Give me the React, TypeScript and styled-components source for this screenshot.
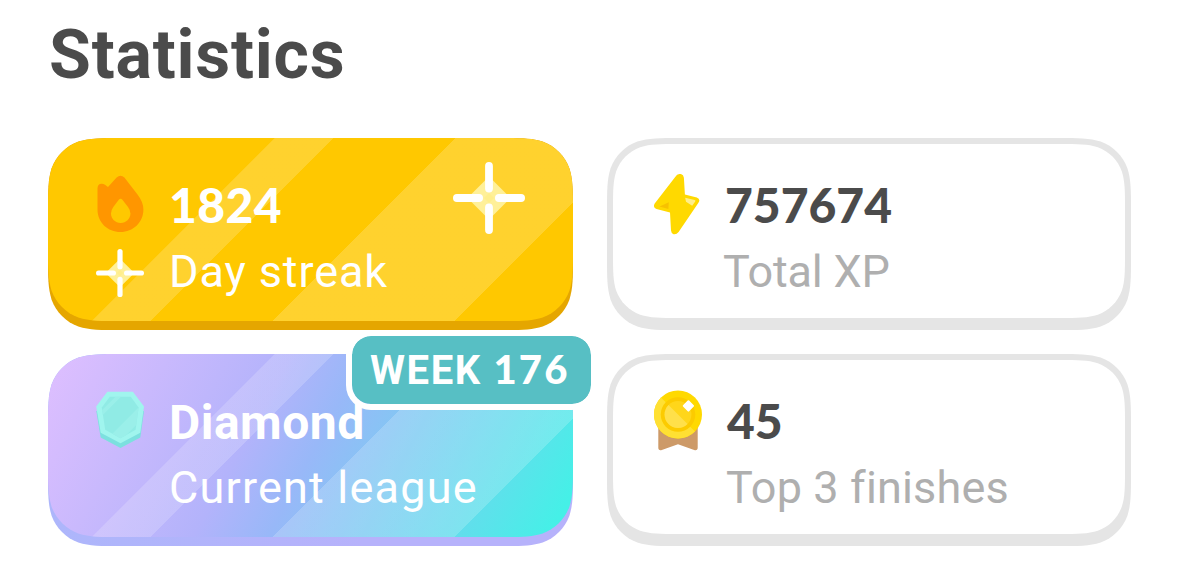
import React from 'react';
import styled, { createGlobalStyle } from 'styled-components';

// continuous ("squircle") corner, radius r, on a w x h box
const squircle = (w: number, h: number, r: number) => {
  const a = 1.52866 * r;
  const b = 1.08849 * r;
  const c = 0.86841 * r;
  const d = 0.63149 * r;
  const e = 0.07491 * r;
  const f = 0.37282 * r;
  const g = 0.16906 * r;
  return [
    `M${a} 0 L${w - a} 0`,
    `C${w - b} 0 ${w - c} 0 ${w - d} ${e}`,
    `C${w - f} ${g} ${w - g} ${f} ${w - e} ${d}`,
    `C${w} ${c} ${w} ${b} ${w} ${a}`,
    `L${w} ${h - a}`,
    `C${w} ${h - b} ${w} ${h - c} ${w - e} ${h - d}`,
    `C${w - g} ${h - f} ${w - f} ${h - g} ${w - d} ${h - e}`,
    `C${w - c} ${h} ${w - b} ${h} ${w - a} ${h}`,
    `L${a} ${h}`,
    `C${b} ${h} ${c} ${h} ${d} ${h - e}`,
    `C${f} ${h - g} ${g} ${h - f} ${e} ${h - d}`,
    `C0 ${h - c} 0 ${h - b} 0 ${h - a}`,
    `L0 ${a}`,
    `C0 ${b} 0 ${c} ${e} ${d}`,
    `C${g} ${f} ${f} ${g} ${d} ${e}`,
    `C${c} 0 ${b} 0 ${a} 0 Z`,
  ].join(' ');
};

const GlobalStyle = createGlobalStyle`
  * {
    box-sizing: border-box;
  }

  body {
    margin: 0;
    background: #fff;
    font-family: Roboto, "Liberation Sans", sans-serif;
    overflow: hidden;
  }
`

const Page = styled.main`
  height: 579px;
  padding: 15px 48px 0;
`

const Title = styled.h1`
  margin: 0 0 43px;
  padding-left: 1px;
  height: 80px;
  font-size: 68px;
  line-height: 80px;
  font-weight: 700;
  letter-spacing: 0.8px;
  color: #4b4b4b;
`

const Grid = styled.section`
  display: grid;
  grid-template-columns: 525px 524px;
  grid-auto-rows: 192px;
  gap: 24px 34px;
`

const Cell = styled.div`
  position: relative;
`

const Base = styled.div<{ $w: number; $fill: string; $outlined?: boolean }>`
  width: ${p => p.$w}px;
  height: 192px;
  padding: ${p => (p.$outlined ? '6px 6px 12px' : '0 0 9px')};
  background: ${p => p.$fill};
  clip-path: path('${p => squircle(p.$w, 192, 48)}');
`

const stripes = `linear-gradient(
  135deg,
  transparent 160px,
  rgba(255, 255, 255, 0.18) 160.7px,
  rgba(255, 255, 255, 0.18) 201.5px,
  transparent 202.2px,
  transparent 287.8px,
  rgba(255, 255, 255, 0.18) 288.5px,
  rgba(255, 255, 255, 0.18) 416.5px,
  transparent 417.2px
)`

const ShinyFace = styled.div<{ $fill: string }>`
  display: flex;
  height: 183px;
  padding: 36px 0 0 48px;
  background: ${stripes}, ${p => p.$fill};
  clip-path: path('${squircle(525, 183, 48)}');
`

const PlainFace = styled.div`
  display: flex;
  height: 174px;
  padding: 30px 0 0 41px;
  background: #fff;
  clip-path: path('${squircle(512, 174, 43)}');
`

const Icons = styled.div`
  flex: none;
  width: 48px;
  margin-right: 23px;
  display: flex;
  flex-direction: column;
  gap: 15px;

  svg {
    display: block;
  }
`

const Texts = styled.div`
  white-space: nowrap;
`

const Value = styled.div<{ $color: string; $spacing: number; $indent?: number }>`
  height: 66px;
  padding-left: ${p => p.$indent || 0}px;
  font-size: 48px;
  line-height: 66px;
  font-weight: 700;
  letter-spacing: ${p => p.$spacing}px;
  color: ${p => p.$color};
`

const Digits = styled(Value)`
  font-family: Lato, Roboto, sans-serif;
  font-weight: 900;
  line-height: 62px;
`

const Label = styled.div<{ $color: string; $spacing: number; $indent?: number }>`
  margin-left: ${p => p.$indent || 0}px;
  font-size: 45px;
  line-height: 64px;
  letter-spacing: ${p => p.$spacing}px;
  color: ${p => p.$color};
`

const CornerSparkle = styled.div`
  position: absolute;
  top: 24px;
  right: 48px;
  line-height: 0;
`

const Badge = styled.div`
  position: absolute;
  top: -24px;
  left: 298px;
  width: 251px;
  height: 80px;
  padding-left: 18px;
  border: 6px solid #fff;
  border-radius: 25px;
  background: #57bfc4;
  background-clip: padding-box;
  color: #fff;
  font-size: 40px;
  line-height: 69px;
  font-weight: 700;
  letter-spacing: 1.6px;
  white-space: nowrap;
`

const BadgeNumber = styled.span`
  font-family: Lato, Roboto, sans-serif;
  font-weight: 900;
  line-height: 1;
  letter-spacing: 2.2px;
`

const Sparkle = ({ size }: { size: number }) => (
  <svg width={size} height={size} viewBox="0 0 72 72">
    <path d="M36 14.5L57.5 36L36 57.5L14.5 36Z" fill="#fff099" />
    <path d="M36 31L41 36L36 41L31 36Z" fill="#ffee8c" />
    <g fill="#fff">
      <rect x="32.1" y="0" width="7.8" height="30.5" rx="3.9" />
      <rect x="32.1" y="41.5" width="7.8" height="30.5" rx="3.9" />
      <rect x="0" y="32.1" width="30" height="7.8" rx="3.9" />
      <rect x="42" y="32.1" width="30" height="7.8" rx="3.9" />
    </g>
  </svg>
)

const Flame = () => (
  <svg width="48" height="60" viewBox="0 0 48 60">
    <path
      d="M1.5 14.5Q1.5 9.9 5.6 9.7Q7.4 9.6 9 10.8L12 13L20.6 3.4Q24.5 0 28.4 3.4L41.5 20.5Q47.4 28 47.4 35.5C47.4 48.5 37 58 24.5 58C11.7 58 1.5 48.5 1.5 35.5Z"
      fill="#ff9600"
    />
    <path
      d="M22.8 25.8Q24.6 23.6 26.4 25.8L32 33Q34.4 36.2 34.4 39.6C34.4 45 30 49 24.7 49C19.2 49 15 45 15 39.6Q15 36.2 17.3 33Z"
      fill="#ffc800"
    />
  </svg>
)

const Bolt = () => (
  <svg width="48" height="62" viewBox="0 0 48 62">
    <path
      d="M21.2 2.9Q23.4 -0.6 26.9 0.1Q29.6 0.7 29.9 3.8L30.9 20.5L42.8 23.6Q47 25.2 44.3 29L24.6 58Q22.4 60.8 19.5 60.2Q17.2 59.4 17 56.6L16 38.4L2.5 34.9Q-1.4 33.4 0.7 29.6Z"
      fill="#ffd900"
    />
    <path d="M14.8 28.3L14.4 35L5.5 32.4Z" fill="#f7c100" />
    <path d="M31.2 23.8L40.6 26Q42 26.4 41.2 27.6L38.2 31.8L32 27.8Z" fill="#ffee8a" />
  </svg>
)

const Gem = () => (
  <svg width="49" height="60" viewBox="0 0 49 60">
    <path d="M0.3 21L48 21L44.3 47.5L24.5 58L4.7 47.5Z" fill="#7ce0df" />
    <path d="M11.3 1.7H36.9L48 16.5L44.3 42.8L24.5 53.2L4.7 42.8L0.2 16.5Z" fill="#a0f5ee" />
    <path d="M13.8 6.7H34.8L42.6 17.6L39.6 39.7L24.5 48.3L9.2 39.7L5.8 17.6Z" fill="#90ebe5" />
    <path d="M19.5 6.7H25L6.8 25L6.2 20Z" fill="#9aefe9" />
    <path d="M42.2 20.5L40.2 35L30 45.2L24.5 48.3L16.4 43.8L42 18Z" fill="#9aefe9" />
  </svg>
)

const Medal = () => (
  <svg width="48" height="62" viewBox="0 0 48 62">
    <path
      d="M4.3 36H43.7V57.5Q43.7 61 40.2 60.1L24 54.3L7.8 60.1Q4.3 61 4.3 57.5Z"
      fill="#cd9a68"
    />
    <circle cx="24" cy="24.5" r="24" fill="#ffd900" />
    <path d="M7 7.5A24 24 0 0 0 41 41.5Z" fill="#ffe033" />
    <circle cx="24" cy="24.5" r="17.3" fill="#fccb00" />
    <circle cx="24" cy="24.5" r="13.4" fill="#ffd61a" />
    <path d="M14.5 15A13.4 13.4 0 0 0 33.5 34Z" fill="#ffe04a" />
    <rect x="30.1" y="11.6" width="8.6" height="8.6" rx="1" fill="#fff" transform="rotate(45 34.4 15.9)" />
  </svg>
)

const gem = 'linear-gradient(118deg, #dfbfff 0%, #b3b3fb 39%, #98b8f8 51%, #5de1eb 84%, #45f0e7 96%)'

function App() {
  return (
    <>
      <GlobalStyle />
      <Page>
        <Title>Statistics</Title>
        <Grid>
          <Cell>
            <Base $w={525} $fill="#e5a600">
              <ShinyFace $fill="#ffc800">
                <Icons>
                  <Flame />
                  <Sparkle size={48} />
                </Icons>
                <Texts>
                  <Digits $color="#fff" $spacing={0.4} $indent={2}>1824</Digits>
                  <Label $color="#fff" $spacing={0.9} $indent={2}>Day streak</Label>
                </Texts>
              </ShinyFace>
            </Base>
            <CornerSparkle>
              <Sparkle size={72} />
            </CornerSparkle>
          </Cell>
          <Cell>
            <Base $w={524} $fill="#e5e5e5" $outlined>
              <PlainFace>
                <Icons>
                  <Bolt />
                </Icons>
                <Texts>
                  <Digits $color="#4b4b4b" $spacing={0}>757674</Digits>
                  <Label $color="#afafaf" $spacing={-0.2} $indent={-2}>Total XP</Label>
                </Texts>
              </PlainFace>
            </Base>
          </Cell>
          <Cell>
            <Base $w={525} $fill="linear-gradient(90deg, #adb6fb, #b6b2fb 60%)">
              <ShinyFace $fill={gem}>
                <Icons>
                  <Gem />
                </Icons>
                <Texts>
                  <Value $color="#fff" $spacing={0.5} $indent={2}>Diamond</Value>
                  <Label $color="#fff" $spacing={1.2} $indent={2}>Current league</Label>
                </Texts>
              </ShinyFace>
            </Base>
            <Badge>WEEK <BadgeNumber>176</BadgeNumber></Badge>
          </Cell>
          <Cell>
            <Base $w={524} $fill="#e5e5e5" $outlined>
              <PlainFace>
                <Icons>
                  <Medal />
                </Icons>
                <Texts>
                  <Digits $color="#4b4b4b" $spacing={0} $indent={2}>45</Digits>
                  <Label $color="#afafaf" $spacing={0.15} $indent={1}>Top 3 finishes</Label>
                </Texts>
              </PlainFace>
            </Base>
          </Cell>
        </Grid>
      </Page>
    </>
  );
}

export default App;
